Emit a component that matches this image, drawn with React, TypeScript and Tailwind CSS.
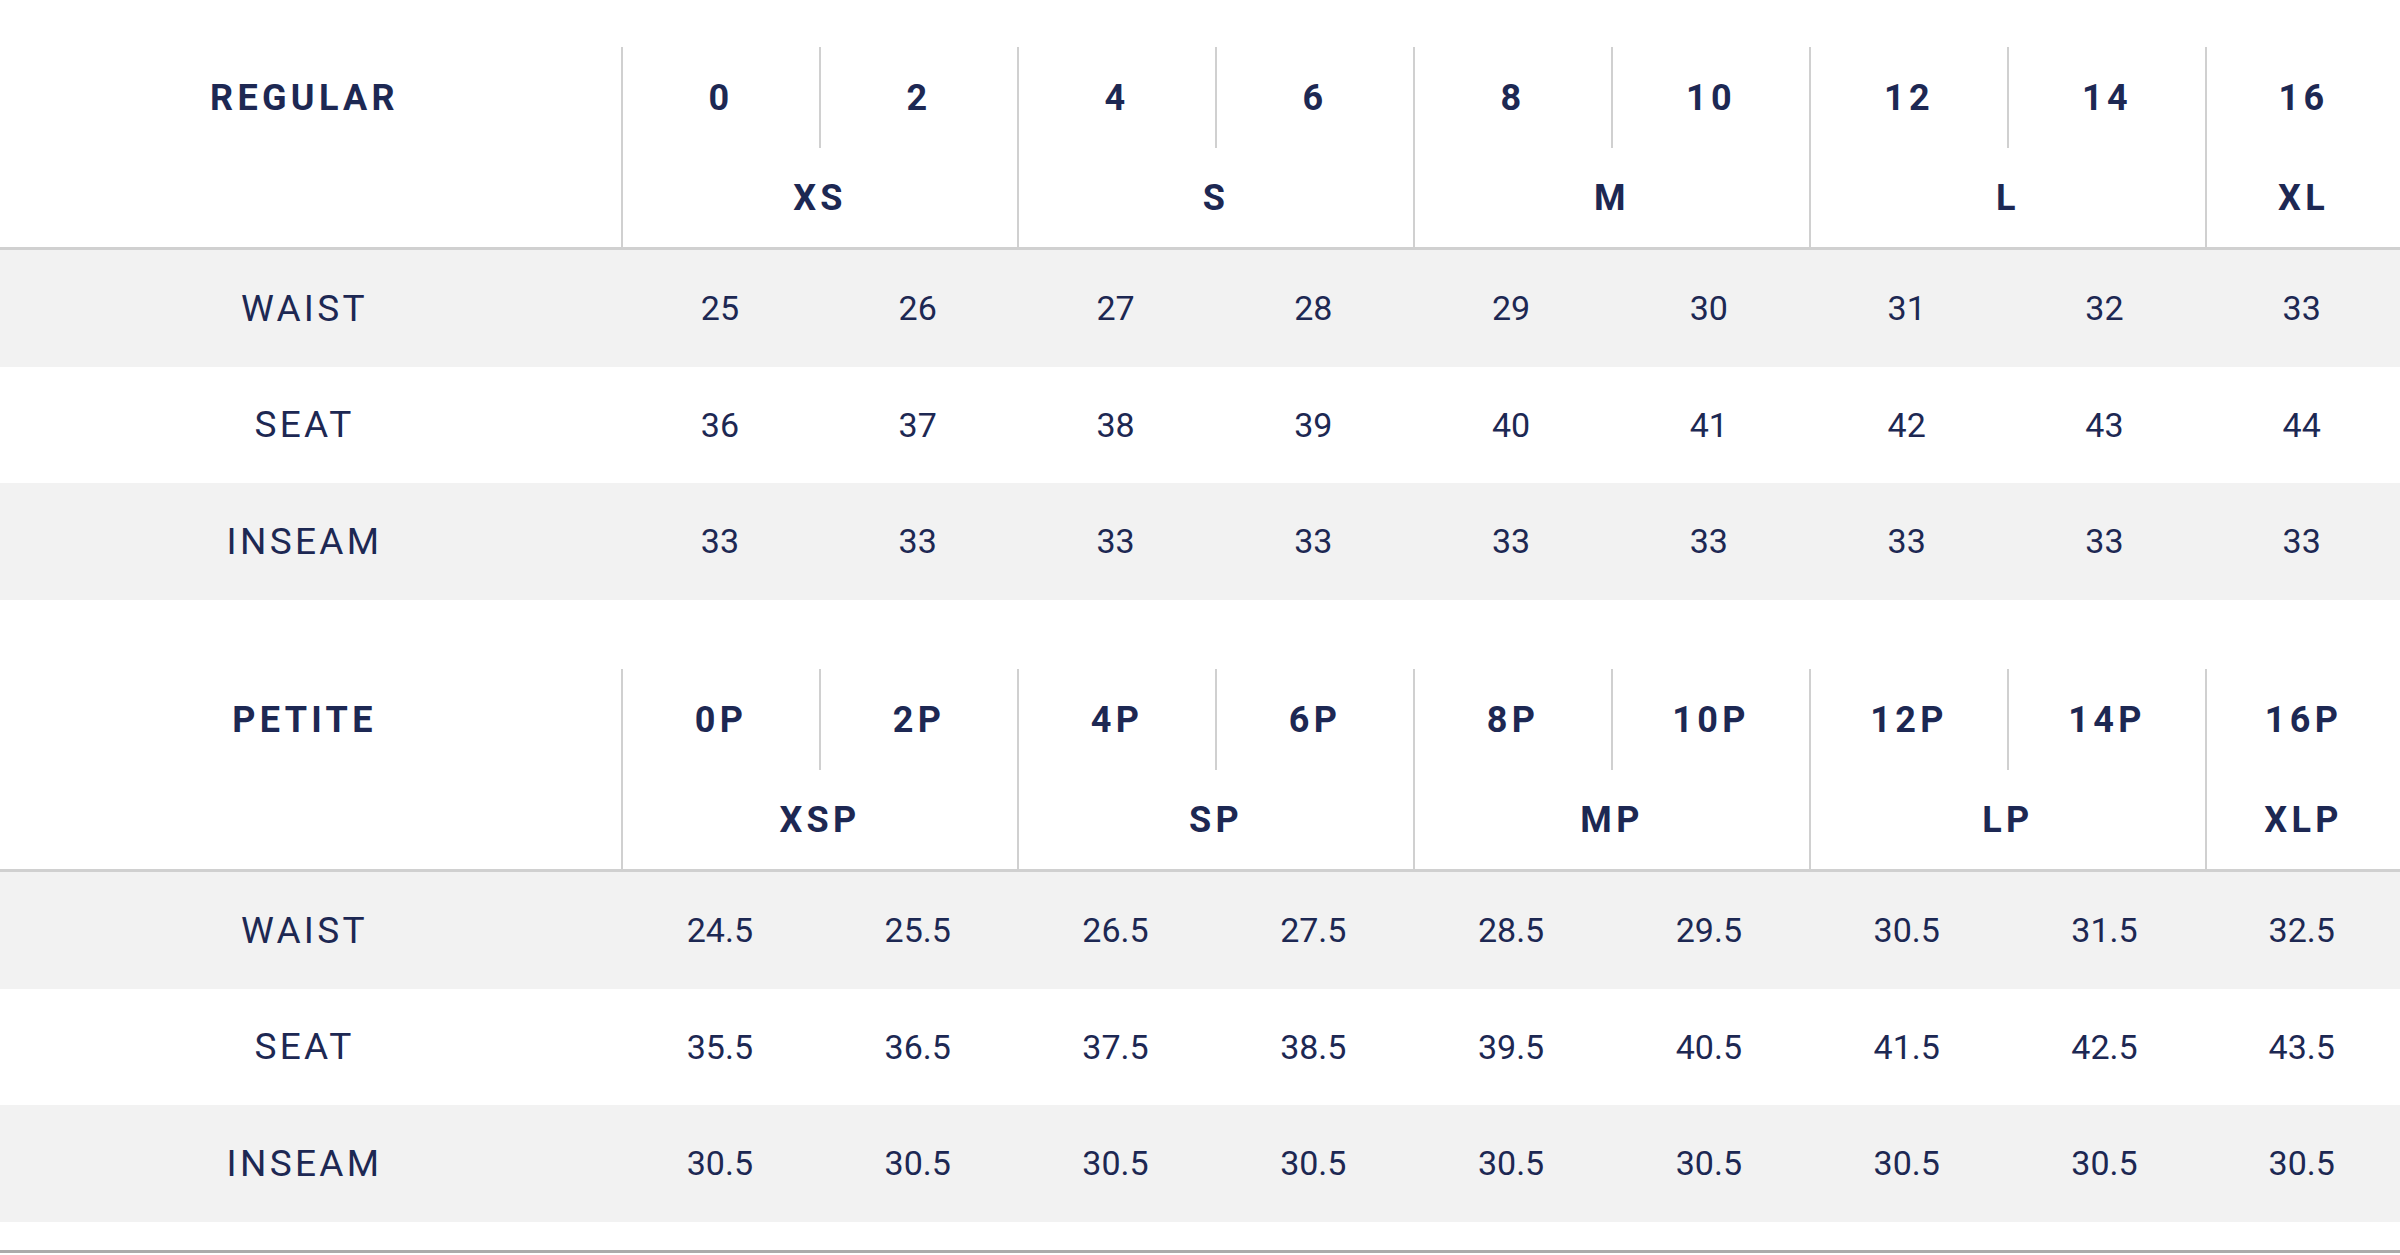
type Group = { label: string; sizes: string[] };

type Chart = {
	title: string;
	groups: Group[];
	rows: { name: string; values: string[] }[];
};

const charts: Chart[] = [
	{
		title: "REGULAR",
		groups: [
			{ label: "XS", sizes: ["0", "2"] },
			{ label: "S", sizes: ["4", "6"] },
			{ label: "M", sizes: ["8", "10"] },
			{ label: "L", sizes: ["12", "14"] },
			{ label: "XL", sizes: ["16"] },
		],
		rows: [
			{ name: "WAIST", values: ["25", "26", "27", "28", "29", "30", "31", "32", "33"] },
			{ name: "SEAT", values: ["36", "37", "38", "39", "40", "41", "42", "43", "44"] },
			{ name: "INSEAM", values: ["33", "33", "33", "33", "33", "33", "33", "33", "33"] },
		],
	},
	{
		title: "PETITE",
		groups: [
			{ label: "XSP", sizes: ["0P", "2P"] },
			{ label: "SP", sizes: ["4P", "6P"] },
			{ label: "MP", sizes: ["8P", "10P"] },
			{ label: "LP", sizes: ["12P", "14P"] },
			{ label: "XLP", sizes: ["16P"] },
		],
		rows: [
			{ name: "WAIST", values: ["24.5", "25.5", "26.5", "27.5", "28.5", "29.5", "30.5", "31.5", "32.5"] },
			{ name: "SEAT", values: ["35.5", "36.5", "37.5", "38.5", "39.5", "40.5", "41.5", "42.5", "43.5"] },
			{ name: "INSEAM", values: ["30.5", "30.5", "30.5", "30.5", "30.5", "30.5", "30.5", "30.5", "30.5"] },
		],
	},
];

const headText = "text-[36px] font-bold tracking-[0.12em]";

function SizeTable({ chart }: { chart: Chart }) {
	return (
		<div>
			{/* Header */}
			<div className="flex border-b-[3px] border-[#d0d0d0]">
				<div className="w-[621px] shrink-0 pr-[12px]">
					<div className={`flex h-[101px] items-center justify-center ${headText}`}>
						{chart.title}
					</div>
				</div>
				{chart.groups.map((g) => (
					<div
						key={g.label}
						className={`flex flex-col border-l-2 border-[#d0d0d0] ${g.sizes.length === 2 ? "w-[396px] shrink-0" : "flex-1"}`}
					>
						<div className="flex h-[101px]">
							{g.sizes.map((s, i) => (
								<div
									key={s}
									className={`flex flex-1 items-center justify-center ${headText} ${i > 0 ? "border-l-2 border-[#d0d0d0]" : ""}`}
								>
									{s}
								</div>
							))}
						</div>
						<div className={`flex h-[99px] items-center justify-center ${headText}`}>
							{g.label}
						</div>
					</div>
				))}
			</div>

			{/* Rows */}
			{chart.rows.map((row, idx) => (
				<div
					key={row.name}
					className={`flex h-[116.7px] items-center ${idx % 2 === 0 ? "bg-[#f2f2f2]" : "bg-white"}`}
				>
					<div className="w-[621px] shrink-0 pr-[12px] text-center text-[37px] tracking-[0.09em]">
						{row.name}
					</div>
					<div className="grid flex-1 grid-cols-[repeat(8,197.8px)_1fr]">
						{row.values.map((v, i) => (
							<div key={i} className="text-center text-[34px]">
								{v}
							</div>
						))}
					</div>
				</div>
			))}
		</div>
	);
}

export default function App() {
	return (
		<div className="min-h-screen bg-white pt-[47px] text-[#1d2853] [font-family:Roboto,'Liberation_Sans',sans-serif]">
			<SizeTable chart={charts[0]} />
			<div className="mt-[69px]">
				<SizeTable chart={charts[1]} />
			</div>
			<div className="mt-[28px] border-t-[3px] border-[#ababab]" />
		</div>
	);
}
